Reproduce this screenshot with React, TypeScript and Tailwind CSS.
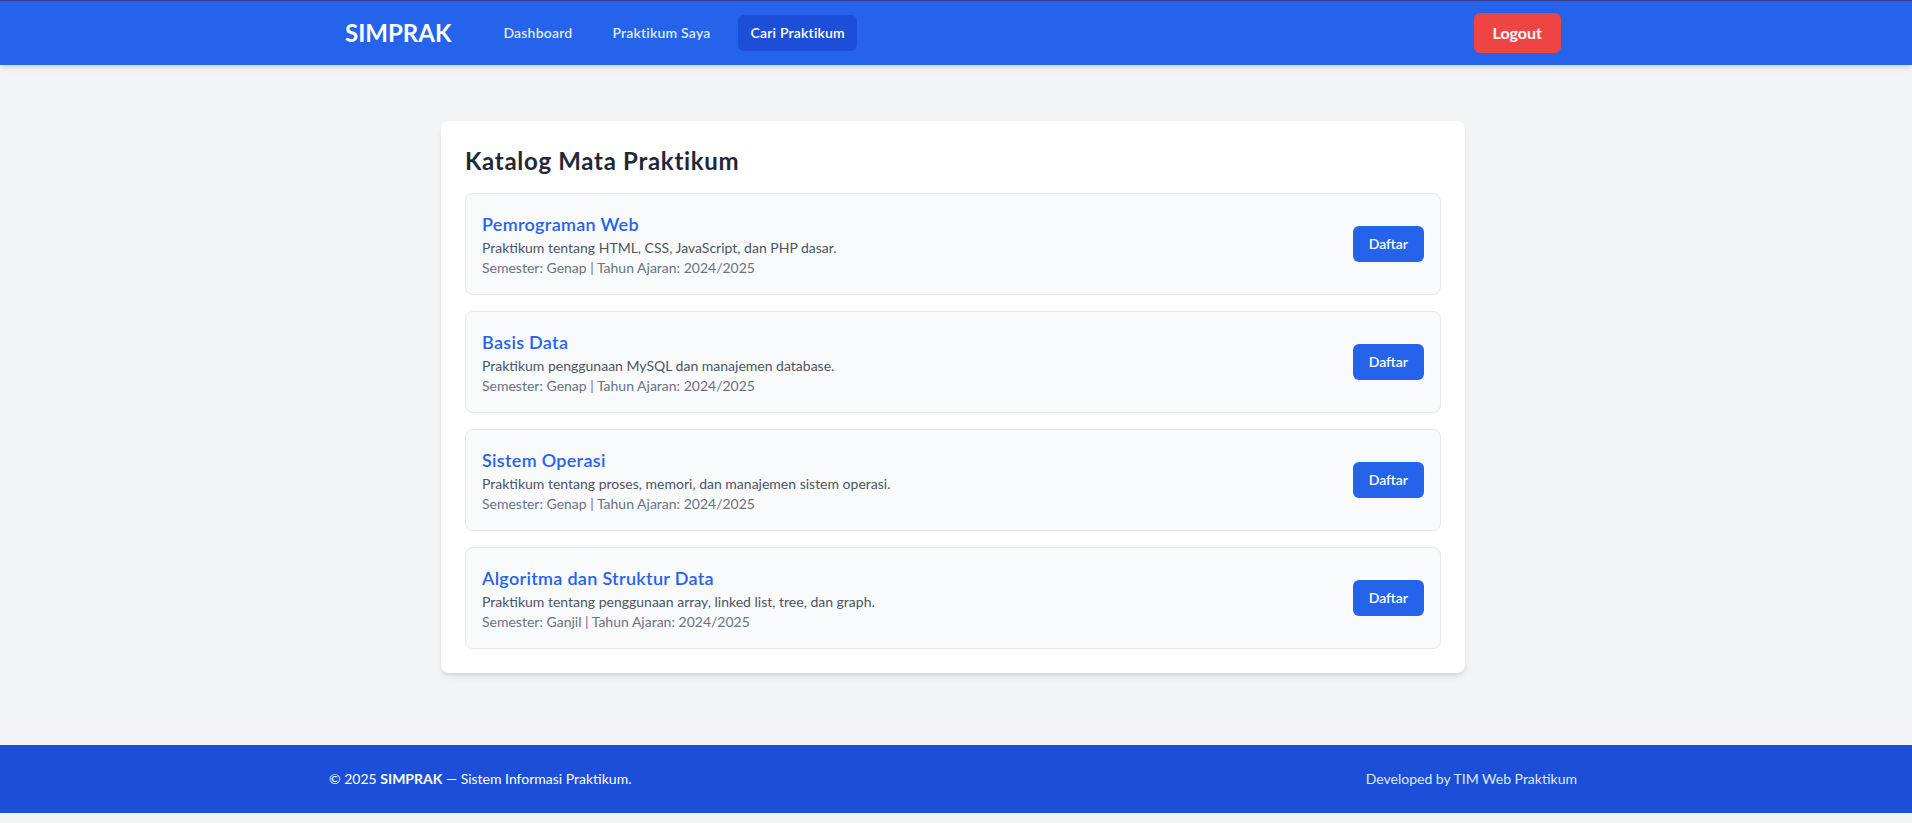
import React from 'react';

interface Praktikum {
  nama: string;
  deskripsi: string;
  semester: string;
  tahun: string;
}

const daftarPraktikum: Praktikum[] = [
  {
    nama: 'Pemrograman Web',
    deskripsi: 'Praktikum tentang HTML, CSS, JavaScript, dan PHP dasar.',
    semester: 'Genap',
    tahun: '2024/2025',
  },
  {
    nama: 'Basis Data',
    deskripsi: 'Praktikum penggunaan MySQL dan manajemen database.',
    semester: 'Genap',
    tahun: '2024/2025',
  },
  {
    nama: 'Sistem Operasi',
    deskripsi: 'Praktikum tentang proses, memori, dan manajemen sistem operasi.',
    semester: 'Genap',
    tahun: '2024/2025',
  },
  {
    nama: 'Algoritma dan Struktur Data',
    deskripsi: 'Praktikum tentang penggunaan array, linked list, tree, dan graph.',
    semester: 'Ganjil',
    tahun: '2024/2025',
  },
];

const Navbar: React.FC = () => {
  return (
    <nav className="bg-[#2563eb] border-t border-[#3f3a8c] shadow-md relative z-10">
      {/* pr-[6px]: sisakan ruang seperti scrollbar gutter */}
      <div className="pr-[6px]">
        <div className="max-w-7xl mx-auto px-8 h-16 flex items-center justify-between">
          <div className="flex items-center">
            <span className="text-white text-2xl font-bold">SIMPRAK</span>
            <div className="ml-10 flex items-center space-x-4">
              <a href="#" className="text-[#dbeafe] px-3 py-2 rounded-md text-sm font-semibold tracking-[0.2px]">
                Dashboard
              </a>
              <a href="#" className="text-[#dbeafe] px-3 py-2 rounded-md text-sm font-semibold tracking-[0.2px]">
                Praktikum Saya
              </a>
              {/* halaman aktif */}
              <a href="#" className="bg-[#1d4ed8] text-white px-3 py-2 rounded-md text-sm font-semibold tracking-[0.2px]">
                Cari Praktikum
              </a>
            </div>
          </div>
          <a href="#" className="bg-[#ef4444] text-white font-bold px-[19px] py-2 rounded-md">
            Logout
          </a>
        </div>
      </div>
    </nav>
  );
};

const App: React.FC = () => {
  return (
    <div className="bg-[#f3f4f6] min-h-screen" style={{ fontFamily: 'Lato, "Noto Sans", sans-serif' }}>
      <Navbar />

      <main className="pt-14 pb-[72px] pl-6 pr-[30px]">
        <div className="max-w-5xl mx-auto bg-white rounded-lg shadow-md p-6">
          <h1 className="text-2xl font-bold text-[#1f2937] tracking-[0.7px] mb-4">Katalog Mata Praktikum</h1>
          <div className="space-y-4">
            {daftarPraktikum.map((p) => (
              <div
                key={p.nama}
                className="border border-[#e5e7eb] bg-[#f9fafb] rounded-lg p-4 flex items-center justify-between"
              >
                <div>
                  <h2 className="text-lg font-semibold text-[#2563eb] tracking-[0.3px]">{p.nama}</h2>
                  <p className="text-sm text-[#4b5563]">{p.deskripsi}</p>
                  <p className="text-sm text-[#6b7280]">
                    Semester: {p.semester} | Tahun Ajaran: {p.tahun}
                  </p>
                </div>
                <button className="bg-[#2563eb] text-white text-sm font-semibold px-4 py-2 rounded-md">
                  Daftar
                </button>
              </div>
            ))}
          </div>
        </div>
      </main>

      <footer className="bg-[#1d4ed8] text-white">
        <div className="pr-[6px]">
          <div className="max-w-7xl mx-auto px-4 py-6 flex items-center justify-between text-sm">
            <p>
              © 2025 <span className="font-bold">SIMPRAK</span> — Sistem Informasi Praktikum.
            </p>
            <p className="text-[#dbeafe]">Developed by TIM Web Praktikum</p>
          </div>
        </div>
      </footer>
    </div>
  );
};

export default App;
